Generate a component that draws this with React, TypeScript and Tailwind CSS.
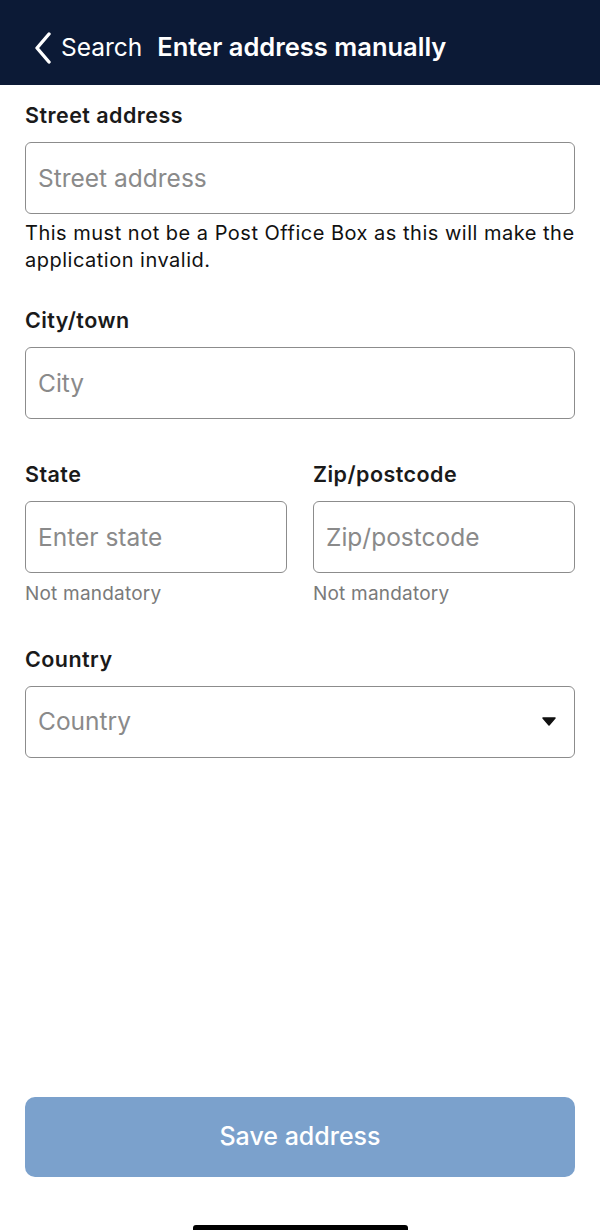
const font = { fontFamily: 'Inter, "Noto Sans", sans-serif' }

function Label({ children }: { children: React.ReactNode }) {
  return <div className="text-[21.5px] font-semibold text-[#1a1a1a] leading-[26px] tracking-[0.45px]">{children}</div>
}

function Field({ placeholder }: { placeholder: string }) {
  return (
    <div className="mt-[14px] h-[72px] rounded-[6px] border-[1.5px] border-[#8c8c8c] flex items-center px-[12px]">
      <span className="text-[24.5px] text-[#8a8a8a]">{placeholder}</span>
    </div>
  )
}

export default function App() {
  return (
    <div className="min-h-[1230px] w-[600px] bg-white flex flex-col" style={font}>
      {/* Header */}
      <div className="h-[85px] bg-[#0c1a36] flex items-center pl-[34px] pt-[10px] text-white">
        <svg width="18" height="32" viewBox="0 0 18 32" className="mr-[9px]">
          <path d="M15 2 L3 16 L15 30" fill="none" stroke="white" strokeWidth="3.4" strokeLinecap="round" strokeLinejoin="round" />
        </svg>
        <span className="text-[24.5px]">Search</span>
        <span className="text-[25.5px] font-semibold ml-[15px]">Enter address manually</span>
      </div>

      <div className="flex-1 flex flex-col px-[25px]">
        <div className="mt-[17px]">
          <Label>Street address</Label>
          <Field placeholder="Street address" />
          <p className="mt-[6px] text-[20px] leading-[27px] text-[#111] tracking-[0.5px]">
            This must not be a Post Office Box as this will make the application invalid.
          </p>
        </div>

        <div className="mt-[33px]">
          <Label>City/town</Label>
          <Field placeholder="City" />
        </div>

        <div className="mt-[42px] grid grid-cols-2 gap-[26px]">
          <div>
            <Label>State</Label>
            <Field placeholder="Enter state" />
            <div className="mt-[7px] text-[19px] text-[#7a7a7a] tracking-[0.2px]">Not mandatory</div>
          </div>
          <div>
            <Label>Zip/postcode</Label>
            <Field placeholder="Zip/postcode" />
            <div className="mt-[7px] text-[19px] text-[#7a7a7a] tracking-[0.2px]">Not mandatory</div>
          </div>
        </div>

        <div className="mt-[37px]">
          <Label>Country</Label>
          <div className="mt-[14px] h-[72px] rounded-[6px] border-[1.5px] border-[#8c8c8c] flex items-center justify-between pl-[12px] pr-[18px]">
            <span className="text-[24.5px] text-[#8a8a8a]">Country</span>
            <svg width="14" height="9" viewBox="0 0 14 9">
              <path d="M1 1 L13 1 L7 8 Z" fill="#111" stroke="#111" strokeWidth="1.5" strokeLinejoin="round" />
            </svg>
          </div>
        </div>

        <div className="flex-1" />

        <button className="mb-[48px] h-[80px] w-full rounded-[10px] bg-[#7ba1cc] text-white text-[25px] font-medium">
          Save address
        </button>
      </div>

      <div className="flex justify-center">
        <div className="w-[215px] h-[5px] bg-black rounded-t-[3px]" />
      </div>
    </div>
  )
}
